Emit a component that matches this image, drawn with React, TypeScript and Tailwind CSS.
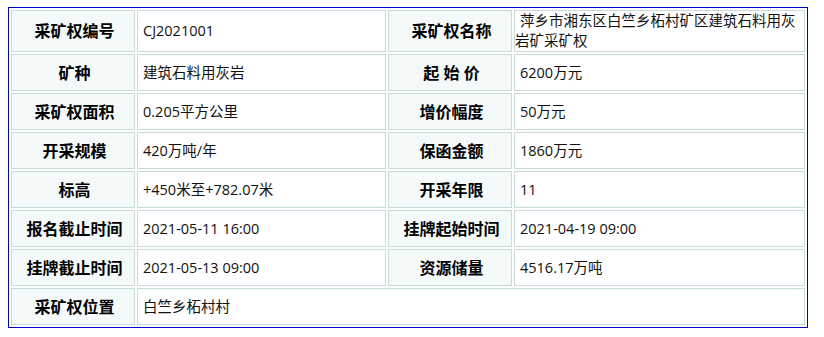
const rows: [string, string, string?, string?][] = [
  ["采矿权编号", "CJ2021001", "采矿权名称", "萍乡市湘东区白竺乡柘村矿区建筑石料用灰岩矿采矿权"],
  ["矿种", "建筑石料用灰岩", "起 始 价", "6200万元"],
  ["采矿权面积", "0.205平方公里", "增价幅度", "50万元"],
  ["开采规模", "420万吨/年", "保函金额", "1860万元"],
  ["标高", "+450米至+782.07米", "开采年限", "11"],
  ["报名截止时间", "2021-05-11 16:00", "挂牌起始时间", "2021-04-19 09:00"],
  ["挂牌截止时间", "2021-05-13 09:00", "资源储量", "4516.17万吨"],
  ["采矿权位置", "白竺乡柘村村"],
]

function Label({ text }: { text: string }) {
  return (
    <div className="min-h-[37px] border border-[#c6dcd8] bg-[#f4fafa] flex items-center justify-center pl-[3px] text-[16px] font-bold text-black whitespace-pre">
      {text}
    </div>
  )
}

function Value({ text, wide }: { text: string; wide?: boolean }) {
  return (
    <div
      className={`min-h-[37px] border border-[#c6dcd8] bg-white flex items-center indent-[5px] text-[14.5px] leading-[20px] text-[#111] ${
        wide ? "col-span-3" : ""
      }`}
    >
      <span>{text}</span>
    </div>
  )
}

export default function App() {
  return (
    <div
      className="pl-[8px] pt-[7px] bg-white w-[824px] h-[337px]"
      style={{ fontFamily: '"Open Sans", "Noto Sans CJK SC", sans-serif' }}
    >
      <div className="w-[800px] border border-[#0000cc] p-[2px] grid grid-cols-[124px_249px_124px_291px] gap-[2px]">
        {rows.map((r, i) => (
          <div key={i} className="contents">
            <Label text={r[0]} />
            <Value text={r[1]} wide={!r[2]} />
            {r[2] && <Label text={r[2]} />}
            {r[3] && <Value text={r[3]} />}
          </div>
        ))}
      </div>
    </div>
  )
}
